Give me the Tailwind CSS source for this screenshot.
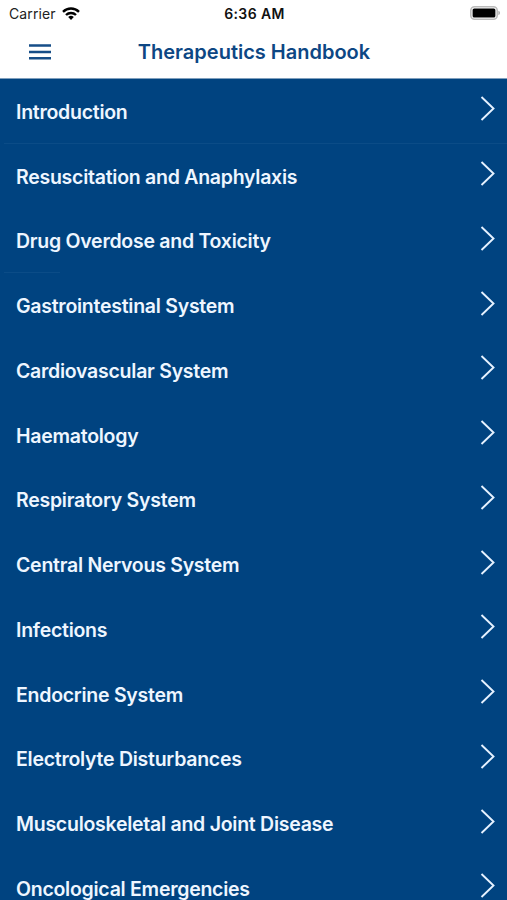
<!doctype html>
<html lang="en">
  <head>
    <meta charset="UTF-8" />
    <meta name="viewport" content="width=device-width, initial-scale=1.0" />
    <title>Therapeutics Handbook</title>
    <script src="https://cdn.jsdelivr.net/npm/@tailwindcss/browser@4"></script>
  </head>

  <body class="h-screen overflow-hidden bg-[#004380] font-['Inter',sans-serif]">
    <header class="h-[79px] border-b border-[#7f9fbd] bg-white">
      <!-- Status bar -->
      <div class="grid h-[27px] grid-cols-3 items-center pr-[7px] pl-[9px] text-[14px] text-black">
        <div class="flex items-center gap-[6px]">
          <span class="tracking-[0.12px] text-[#222]">Carrier</span>
          <svg class="mb-px h-[13px] w-[18px]" viewBox="0 0 18 13" fill="none" stroke="#000" stroke-width="2.4">
            <path d="M1 4.8a11.5 11.5 0 0 1 16 0" />
            <path d="M4 8a7.2 7.2 0 0 1 10 0" />
            <path d="M9 13 6.2 10.1a4 4 0 0 1 5.6 0z" fill="#000" stroke="none" />
          </svg>
        </div>
        <div class="text-center font-semibold tracking-[0.4px] text-[#111]">6:36 AM</div>
        <div class="flex justify-end">
          <svg class="mb-px h-[14px] w-[30px]" viewBox="0 0 30 14">
            <rect x=".8" y=".8" width="26.4" height="12.4" rx="3.8" fill="#fff" stroke="#bbb" stroke-width="1.6" />
            <rect x="2.6" y="2.4" width="22.8" height="9.2" rx="1.6" />
            <path d="M28.4 4.8q1.6.6 1.6 2.2t-1.6 2.2z" fill="#aaa" />
          </svg>
        </div>
      </div>

      <!-- Title bar -->
      <div class="grid h-[50px] grid-cols-[80px_1fr_80px] items-center text-[#0d4784]">
        <button type="button" aria-label="Menu" class="flex justify-center">
          <svg class="h-4 w-[22px]" viewBox="0 0 22 16" stroke="#164e88" stroke-width="2.4">
            <path d="M0 1.5h22M0 8h22M0 14.3h22" />
          </svg>
        </button>
        <h1 class="pl-px text-center text-[20px] font-semibold">Therapeutics Handbook</h1>
      </div>
    </header>

    <ul id="chapters"></ul>
  </body>
  <script>
    var chapters = [
      "Introduction",
      "Resuscitation and Anaphylaxis",
      "Drug Overdose and Toxicity",
      "Gastrointestinal System",
      "Cardiovascular System",
      "Haematology",
      "Respiratory System",
      "Central Nervous System",
      "Infections",
      "Endocrine System",
      "Electrolyte Disturbances",
      "Musculoskeletal and Joint Disease",
      "Oncological Emergencies",
    ];

    // Only two of the separators are visible against the blue
    var separators = {
      0: "bg-[#0b4c87]",
      2: "w-14 bg-[#0b4c87]",
    };

    document.getElementById("chapters").innerHTML = chapters
      .map(function (name, i) {
        return `
          <li class="flex h-[64.75px] flex-col text-[19.5px] font-semibold tracking-[-0.26px] text-[#eef6ff]">
            <div class="flex flex-1 items-center justify-between pr-3 pl-4">
              <span class="pt-[3px]">${name}</span>
              <svg class="mb-1 h-[25px] w-[15px]" viewBox="0 0 15 25" fill="none" stroke="#e6f2ff" stroke-width="1.9">
                <path d="M1.5 1 13.5 12.5 1.5 24" />
              </svg>
            </div>
            <div class="ml-1 h-px ${separators[i] || ""}"></div>
          </li>`;
      })
      .join("");
  </script>
</html>
